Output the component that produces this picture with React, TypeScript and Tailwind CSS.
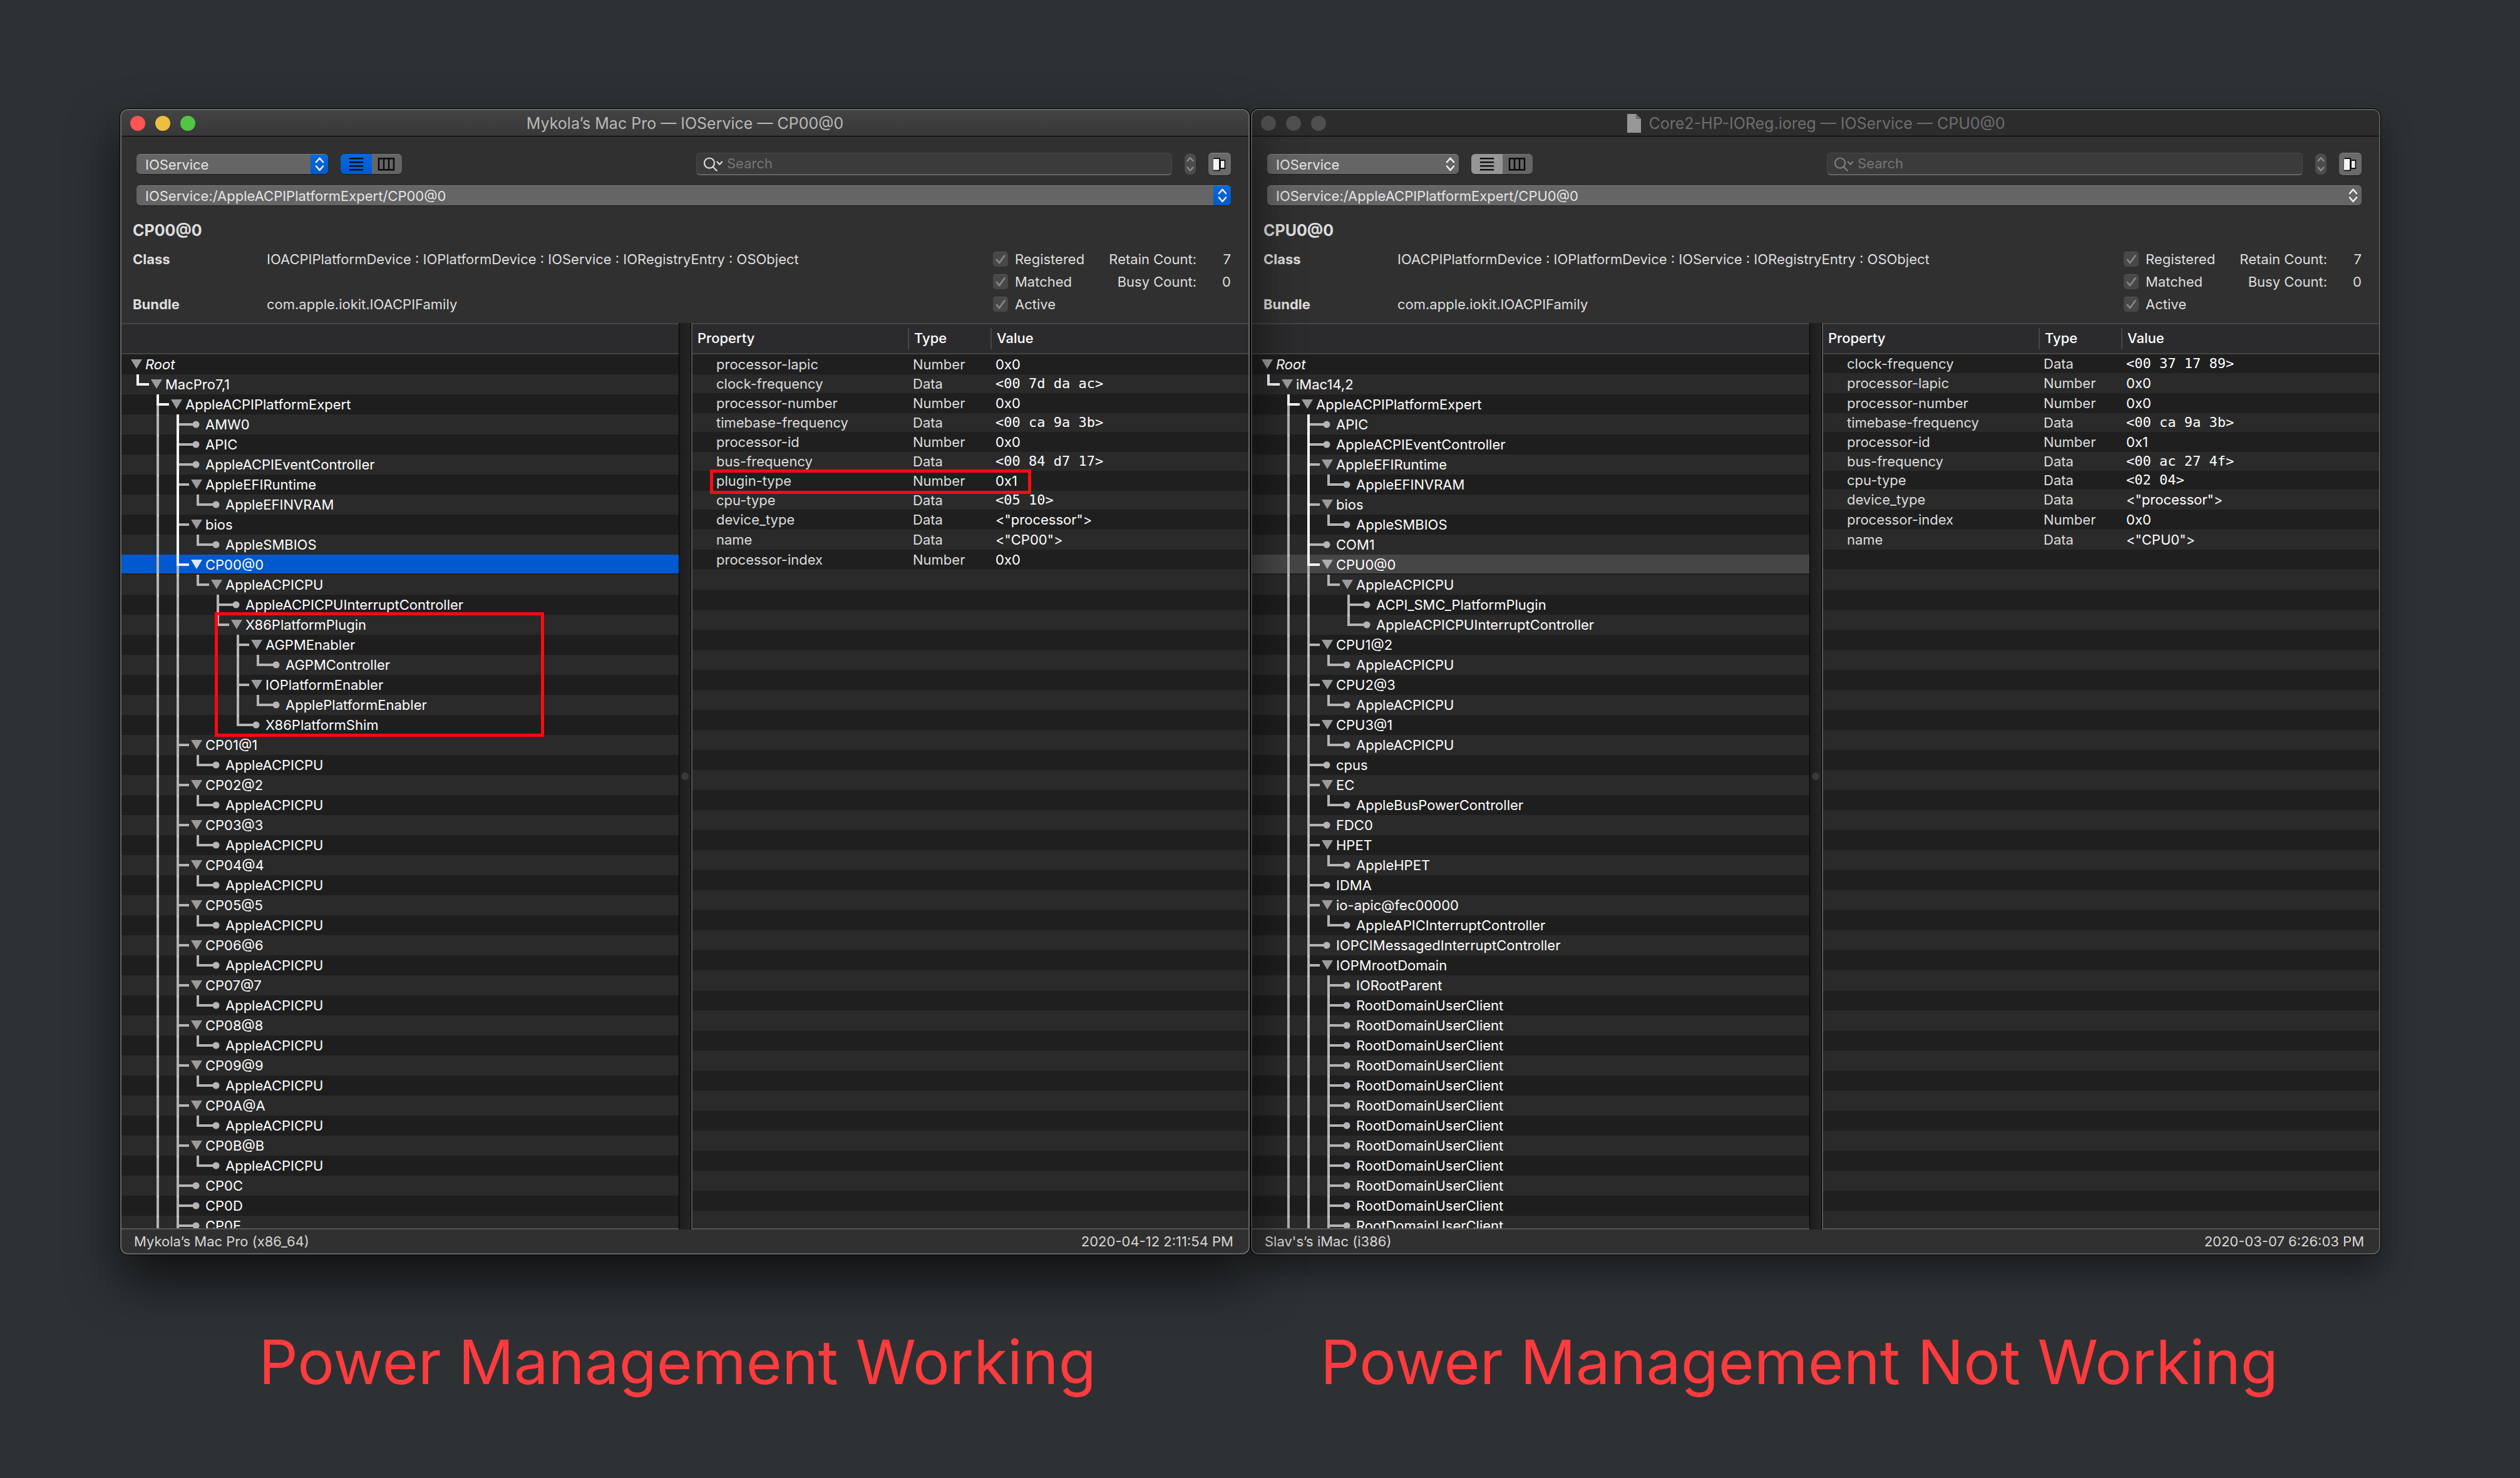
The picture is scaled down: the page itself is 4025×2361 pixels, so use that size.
import { useId } from "react";
import clsx from "clsx";

type Node = [depth: number, label: string, kind?: "leaf"];
type Property = [name: string, type: "Number" | "Data", value: string];

interface Registry {
  active: boolean;
  title: string;
  plane: string;
  path: string;
  name: string;
  tree: Node[];
  selected: number;
  framedNode?: number;
  properties: Property[];
  framedProperty?: number;
  machine: string;
  date: string;
}

const cores = ["1@1", "2@2", "3@3", "4@4", "5@5", "6@6", "7@7", "8@8", "9@9", "A@A", "B@B"];

const working: Registry = {
  active: true,
  title: "Mykola’s Mac Pro — IOService — CP00@0",
  plane: "IOService",
  path: "IOService:/AppleACPIPlatformExpert/CP00@0",
  name: "CP00@0",
  tree: [
    [0, "Root"],
    [1, "MacPro7,1"],
    [2, "AppleACPIPlatformExpert"],
    [3, "AMW0", "leaf"],
    [3, "APIC", "leaf"],
    [3, "AppleACPIEventController", "leaf"],
    [3, "AppleEFIRuntime"],
    [4, "AppleEFINVRAM", "leaf"],
    [3, "bios"],
    [4, "AppleSMBIOS", "leaf"],
    [3, "CP00@0"],
    [4, "AppleACPICPU"],
    [5, "AppleACPICPUInterruptController", "leaf"],
    [5, "X86PlatformPlugin"],
    [6, "AGPMEnabler"],
    [7, "AGPMController", "leaf"],
    [6, "IOPlatformEnabler"],
    [7, "ApplePlatformEnabler", "leaf"],
    [6, "X86PlatformShim", "leaf"],
    ...cores.flatMap((core): Node[] => [
      [3, `CP0${core}`],
      [4, "AppleACPICPU", "leaf"],
    ]),
    [3, "CP0C", "leaf"],
    [3, "CP0D", "leaf"],
    [3, "CP0E", "leaf"],
  ],
  selected: 10,
  framedNode: 13,
  properties: [
    ["processor-lapic", "Number", "0x0"],
    ["clock-frequency", "Data", "<00 7d da ac>"],
    ["processor-number", "Number", "0x0"],
    ["timebase-frequency", "Data", "<00 ca 9a 3b>"],
    ["processor-id", "Number", "0x0"],
    ["bus-frequency", "Data", "<00 84 d7 17>"],
    ["plugin-type", "Number", "0x1"],
    ["cpu-type", "Data", "<05 10>"],
    ["device_type", "Data", '<"processor">'],
    ["name", "Data", '<"CP00">'],
    ["processor-index", "Number", "0x0"],
  ],
  framedProperty: 6,
  machine: "Mykola’s Mac Pro (x86_64)",
  date: "2020-04-12 2:11:54 PM",
};

const notWorking: Registry = {
  active: false,
  title: "Core2-HP-IOReg.ioreg — IOService — CPU0@0",
  plane: "IOService",
  path: "IOService:/AppleACPIPlatformExpert/CPU0@0",
  name: "CPU0@0",
  tree: [
    [0, "Root"],
    [1, "iMac14,2"],
    [2, "AppleACPIPlatformExpert"],
    [3, "APIC", "leaf"],
    [3, "AppleACPIEventController", "leaf"],
    [3, "AppleEFIRuntime"],
    [4, "AppleEFINVRAM", "leaf"],
    [3, "bios"],
    [4, "AppleSMBIOS", "leaf"],
    [3, "COM1", "leaf"],
    [3, "CPU0@0"],
    [4, "AppleACPICPU"],
    [5, "ACPI_SMC_PlatformPlugin", "leaf"],
    [5, "AppleACPICPUInterruptController", "leaf"],
    [3, "CPU1@2"],
    [4, "AppleACPICPU", "leaf"],
    [3, "CPU2@3"],
    [4, "AppleACPICPU", "leaf"],
    [3, "CPU3@1"],
    [4, "AppleACPICPU", "leaf"],
    [3, "cpus", "leaf"],
    [3, "EC"],
    [4, "AppleBusPowerController", "leaf"],
    [3, "FDC0", "leaf"],
    [3, "HPET"],
    [4, "AppleHPET", "leaf"],
    [3, "IDMA", "leaf"],
    [3, "io-apic@fec00000"],
    [4, "AppleAPICInterruptController", "leaf"],
    [3, "IOPCIMessagedInterruptController", "leaf"],
    [3, "IOPMrootDomain"],
    [4, "IORootParent", "leaf"],
    ...Array.from({ length: 12 }, (): Node => [4, "RootDomainUserClient", "leaf"]),
  ],
  selected: 10,
  properties: [
    ["clock-frequency", "Data", "<00 37 17 89>"],
    ["processor-lapic", "Number", "0x0"],
    ["processor-number", "Number", "0x0"],
    ["timebase-frequency", "Data", "<00 ca 9a 3b>"],
    ["processor-id", "Number", "0x1"],
    ["bus-frequency", "Data", "<00 ac 27 4f>"],
    ["cpu-type", "Data", "<02 04>"],
    ["device_type", "Data", '<"processor">'],
    ["processor-index", "Number", "0x0"],
    ["name", "Data", '<"CPU0">'],
  ],
  machine: "Slav's’s iMac (i386)",
  date: "2020-03-07 6:26:03 PM",
};

const GRAY = "#b4b4b4";
const JOINT = "#c6c6c6";
const WHITE = "#f8f8ff";

/** Whether the level's line goes on below this row; the list itself runs past the last row. */
function continues(tree: Node[], row: number, level: number) {
  for (let i = row + 1; i < tree.length; i++) {
    if (tree[i][0] < level) return false;
    if (tree[i][0] === level) return true;
  }
  return level > 1;
}

function ancestorAt(tree: Node[], row: number, level: number) {
  if (level > tree[row][0]) return -1;
  let i = row;
  while (i >= 0 && tree[i][0] !== level) i--;
  return i;
}

function Connectors({ tree, row, selected, active }: { tree: Node[]; row: number; selected: number; active: boolean }) {
  const [depth, , kind] = tree[row];
  const width = 38 + 32 * depth;
  const levels = Array.from({ length: depth }, (_, i) => i + 1);
  const onPath = depth > 0 && ancestorAt(tree, selected, depth) === row;
  const x0 = 32 * depth;
  const arrow = row === selected ? (active ? "#dbe7fa" : "#acacac") : "#9b9b9b";
  return (
    <svg width={width} height={32} viewBox={`0 0 ${width} 32`} className="shrink-0" aria-hidden="true">
      {levels.map((level) => {
        const x = 32 * level - 8;
        const target = ancestorAt(tree, selected, level);
        const parent = ancestorAt(tree, selected, level - 1);
        const bright = target >= 0 && row > parent && row <= target;
        const more = continues(tree, row, level);
        if (!more && level !== depth) return null;
        const first = tree[row - 1][0] < level;
        return (
          <g key={level}>
            <rect x={x} width={4} height={more ? 32 : 18} fill={bright && row < target ? WHITE : GRAY} />
            {!bright && !first && <rect x={x} width={4} height={3} fill={JOINT} />}
            {bright && <rect x={x} width={4} height={row < target ? 32 : 18} fill={WHITE} />}
          </g>
        );
      })}
      {depth > 0 && (
        <rect x={x0 - 4} y={14} width={kind ? 24 : 16} height={4} fill={onPath ? WHITE : GRAY} />
      )}
      {kind ? (
        <circle cx={x0 + 23} cy={16} r={5.5} fill={GRAY} />
      ) : (
        <path d={`M${x0 + 15} 8h18l-9 15z`} fill={arrow} />
      )}
    </svg>
  );
}

function Tree({ data }: { data: Registry }) {
  const { tree, selected, active } = data;
  return (
    <section aria-label="Registry tree" className="flex min-w-0 flex-col">
      <div className="h-[50px] border-y-2 border-[#454545] bg-[#2b2b2d]" />
      <ul role="tree" className="h-[1396px] overflow-hidden">
        {tree.map(([depth, label], row) => (
          <li
            key={row}
            role="treeitem"
            aria-level={depth + 1}
            aria-selected={row === selected}
            className={clsx(
              "flex h-8 items-center whitespace-nowrap text-white",
              row === data.framedNode && "relative",
              row === selected
                ? active
                  ? "border-b-2 border-[#1e1e1e] bg-[#0059cf]"
                  : "border-b-2 border-[#1e1e1e] bg-[#464646]"
                : row % 2
                  ? "bg-[#2a2a2a]"
                  : "bg-[#1e1e1e]",
            )}
          >
            <span className="flex h-8 shrink-0 items-center self-start">
              <Connectors tree={tree} row={row} selected={selected} active={active} />
              <span className={clsx(depth === 0 && "italic")}>{label}</span>
            </span>
            {row === data.framedNode && (
              <span className="absolute -top-1 left-[149px] h-[199px] w-[526px] border-5 border-[#ff0a10]" />
            )}
          </li>
        ))}
      </ul>
      <div className="h-0.5 bg-[#565656]" />
    </section>
  );
}

function Properties({ data }: { data: Registry }) {
  const fill = 44 - data.properties.length;
  return (
    <section aria-label="Properties" className="flex min-w-0 flex-col border-l-2 border-[#565656]">
      <div className="h-[1446px] overflow-hidden">
        <table className="w-full table-fixed border-separate border-spacing-0 text-left">
          <colgroup>
            <col className="w-[344px]" />
            <col className="w-[132px]" />
            <col />
          </colgroup>
          <thead>
            <tr className="h-[50px] bg-[#2b2b2d] text-white">
              {["Property", "Type", "Value"].map((heading, i) => (
                <th key={heading} scope="col" className="border-y-2 border-[#454545] p-0 font-medium">
                  <div className={clsx("h-[34px] pl-2 leading-8", i > 0 && "border-l-2 border-[#464646]")}>
                    {heading}
                  </div>
                </th>
              ))}
            </tr>
          </thead>
          <tbody>
            {data.properties.map(([name, type, value], row) => {
              const mono = /^<\d/.test(value);
              return (
                <tr
                  key={name}
                  className={clsx(
                    mono ? "h-[30px] leading-[30px]" : "h-8 leading-8",
                    row % 2 ? "bg-[#2a2a2a]" : "bg-[#1f1f1f]",
                  )}
                >
                  <td className={clsx("p-0 pl-[38px] text-[#dcdcdc]", row === data.framedProperty && "relative")}>
                    {name}
                    {row === data.framedProperty && (
                      <span className="absolute -top-0.5 left-7 h-[39px] w-[513px] border-5 border-[#ff0a10]" />
                    )}
                  </td>
                  <td className="p-0 pl-2 text-[#dcdcdc]">{type}</td>
                  <td
                    className={clsx(
                      "p-0 pl-2 text-white",
                      mono && "font-['DejaVu_Sans_Mono',monospace]",
                    )}
                  >
                    {value}
                  </td>
                </tr>
              );
            })}
            {Array.from({ length: fill }, (_, i) => (
              <tr key={i} className={clsx("h-8", (i + data.properties.length) % 2 ? "bg-[#2a2a2a]" : "bg-[#1f1f1f]")}>
                <td colSpan={3} className="p-0" />
              </tr>
            ))}
          </tbody>
        </table>
      </div>
      <div className="h-0.5 bg-[#565656]" />
    </section>
  );
}

function PopUp({ label, value, active, wide }: { label: string; value: string; active: boolean; wide?: boolean }) {
  return (
    <div
      className={clsx(
        "relative h-8 overflow-hidden rounded-md border-t border-[#808080] bg-[#656565] shadow-[0_1px_1px_#1c1c1c]",
        wide ? "w-full" : "w-[306px]",
      )}
    >
      <select
        aria-label={label}
        defaultValue={value}
        className="h-full w-full appearance-none bg-transparent pr-8 pl-3.5 leading-[30px] text-[#e4e4e4]"
      >
        <option>{value}</option>
      </select>
      <span
        className={clsx(
          "pointer-events-none absolute -top-px right-0 h-8 w-7",
          active && "bg-linear-to-b from-[#006ae3] to-[#005acb]",
        )}
      >
        <svg width={28} height={32} viewBox="0 0 28 32" fill="none" stroke="#eeeeee" strokeWidth={2.6} strokeLinecap="round" strokeLinejoin="round">
          <path d="M9 13l5.500-6.300L20 13M9 19.500l5.500 6.300L20 19.500" />
        </svg>
      </span>
    </div>
  );
}

function ViewSwitch({ active }: { active: boolean }) {
  return (
    <div className="flex h-8 overflow-hidden rounded-md shadow-[0_1px_1px_#1c1c1c]">
      <button
        type="button"
        aria-label="List view"
        aria-pressed="true"
        className={clsx("w-[50px]", active ? "bg-linear-to-b from-[#006ae3] to-[#005acb]" : "bg-[#969696]")}
      >
        <svg width={50} height={32} viewBox="0 0 50 32" fill="#0a0a0a">
          <path d="M14 6h22v2H14zM14 12h22v2H14zM14 18h22v2H14zM14 24h22v2H14z" />
          <path d="M13 8h24v1H13zM13 14h24v1H13zM13 20h24v1H13zM13 26h24v1H13z" opacity={0.35} />
        </svg>
      </button>
      <button type="button" aria-label="Column view" aria-pressed="false" className="w-12 border-t border-[#7a7a7a] bg-[#656565]">
        <svg width={48} height={32} viewBox="0 1 48 32" fill="none" stroke="#0a0a0a" strokeWidth={2.5}>
          <path d="M11 7.200h24v18H11zM19 7v18M27 7v18" />
        </svg>
      </button>
    </div>
  );
}

function Search({ active }: { active: boolean }) {
  return (
    <label className="flex h-9 w-[760px] items-center rounded-md border border-b-2 border-[#484848] border-b-[#666666] bg-[#3b3b3b] pl-2.5">
      <svg
        width={36}
        height={32}
        viewBox="0 0 36 32"
        fill="none"
        stroke={active ? "#dedede" : "#808080"}
        strokeWidth={2.2}
        strokeLinecap="round"
        strokeLinejoin="round"
        className="shrink-0"
        aria-hidden="true"
      >
        <circle cx={10} cy={14.500} r={8} />
        <path d="M15.800 20.500l6 6.200M22.500 12.500l3.800 4.200 3.800-4.200" />
      </svg>
      <input
        type="search"
        aria-label="Search"
        placeholder="Search"
        className="min-w-0 flex-1 bg-transparent pl-0.5 text-white outline-none placeholder:text-[#757575]"
      />
    </label>
  );
}

function Toolbar({ data }: { data: Registry }) {
  return (
    <div className="flex flex-col gap-4 pt-[26px] pr-7 pl-6">
      <div className="flex h-9 items-center gap-5">
        <PopUp label="Plane" value={data.plane} active={data.active} />
        <ViewSwitch active={data.active} />
        <div className="flex-1" />
        <Search active={data.active} />
        <button type="button" aria-label="Previous or next match" className="h-[34px] w-[18px] rounded-lg bg-[#4c4c4c]">
          <svg width={18} height={34} viewBox="0 0 18 34" fill="none" stroke="#909090" strokeWidth={2.2} strokeLinecap="round" strokeLinejoin="round">
            <path d="M4.500 12L9 7l4.500 5M4.500 22.500l4.500 5 4.500-5" />
          </svg>
        </button>
        <button
          type="button"
          aria-label="Toggle drawer"
          className="h-9 w-9 rounded-md border-t border-[#858585] bg-[#6a6a6a] shadow-[0_1px_1px_#1c1c1c]"
        >
          <svg width={36} height={36} viewBox="0 1 36 36">
            <path d="M7.500 8.500H18v2.500h9.500V26H18v3.500H7.500z" fill="#3a3a3a" />
            <path d="M9 8h10v21H9zM19 11h8v15h-8z" fill="#151515" />
            <path d="M8 10h9v17.500H8zM20 13h5.500v11H20z" fill="#f4f4f4" />
          </svg>
        </button>
      </div>
      <PopUp label="Path" value={data.path} active={data.active} wide />
    </div>
  );
}

function CheckBox({ label }: { label: string }) {
  const id = useId();
  return (
    <div className="flex items-center gap-[11px]">
      <span className="relative flex">
        <input
          id={id}
          type="checkbox"
          defaultChecked
          disabled
          className="h-6 w-6 appearance-none rounded-[5px] border-t border-[#5a5a5a] bg-[#484848]"
        />
        <svg width={24} height={24} viewBox="0 0 24 24" fill="none" stroke="#878787" strokeWidth={2.8} strokeLinecap="round" strokeLinejoin="round" className="pointer-events-none absolute inset-0">
          <path d="M6 13l4 5L18.500 6.500" />
        </svg>
      </span>
      <label htmlFor={id}>{label}</label>
    </div>
  );
}

function Summary({ data }: { data: Registry }) {
  return (
    <div className="pt-6 pr-7 pb-3 pl-[18px] text-[#dedede]">
      <h2 className="text-[25px] leading-8 font-bold">{data.name}</h2>
      <div className="flex justify-between pt-3 leading-9">
        <dl className="grid grid-cols-[214px_auto] content-start gap-y-9 whitespace-nowrap">
          <dt className="font-bold">Class</dt>
          <dd>IOACPIPlatformDevice : IOPlatformDevice : IOService : IORegistryEntry : OSObject</dd>
          <dt className="font-bold">Bundle</dt>
          <dd>com.apple.iokit.IOACPIFamily</dd>
        </dl>
        <div className="grid w-[380px] grid-cols-[1fr_auto_55px] content-start text-right">
          <CheckBox label="Registered" />
          <span>Retain Count:</span>
          <span>7</span>
          <CheckBox label="Matched" />
          <span>Busy Count:</span>
          <span>0</span>
          <CheckBox label="Active" />
        </div>
      </div>
    </div>
  );
}

function TitleBar({ data }: { data: Registry }) {
  const { active } = data;
  const light = "h-6 w-6 rounded-full";
  return (
    <header
      className={clsx(
        "grid h-[42px] grid-cols-[1fr_auto_1fr] items-center border-b border-black px-3.5",
        active ? "bg-linear-to-b from-[#434343] to-[#383838]" : "bg-[#2c2c2c]",
      )}
    >
      <div className="flex gap-4">
        <button type="button" aria-label="Close" className={clsx(light, active ? "bg-[#ff5552]" : "bg-[#4f4f4f]")} />
        <button type="button" aria-label="Minimize" className={clsx(light, active ? "bg-[#ebbf40]" : "bg-[#4f4f4f]")} />
        <button type="button" aria-label="Zoom" className={clsx(light, active ? "bg-[#53c443]" : "bg-[#4f4f4f]")} />
      </div>
      <div className="flex items-center gap-3">
        {!active && (
          <svg width={24} height={30} viewBox="0 0 24 30" aria-hidden="true">
            <path d="M1 0h14l8 8v22H1z" fill="#979797" />
            <path d="M15 0l8 8h-8z" fill="#6e6e6e" />
          </svg>
        )}
        <h1 className={clsx("text-[25px] leading-8", active ? "text-[#b8b8b8]" : "text-[#6e6e6e]")}>{data.title}</h1>
      </div>
    </header>
  );
}

function Window({ data }: { data: Registry }) {
  return (
    <article
      className={clsx(
        "relative overflow-hidden rounded-xl border-2 bg-[#303030] text-[22px]",
        data.active
          ? "z-10 border-[#686868] shadow-[0_0_0_1px_#000,0_40px_80px_rgba(0,0,0,0.65)]"
          : "border-[#5c5c5c] shadow-[0_0_0_1px_#000,0_24px_50px_rgba(0,0,0,0.45)]",
      )}
    >
      <TitleBar data={data} />
      <Toolbar data={data} />
      <Summary data={data} />
      <div className="grid grid-cols-[1fr_20px_1fr]">
        <Tree data={data} />
        <div className="flex items-center justify-center border-x border-black bg-linear-to-r from-[#1c1c1c] to-[#252525]">
          <span className="h-3 w-3 rounded-full bg-[#3a3a3a]" />
        </div>
        <Properties data={data} />
      </div>
      <footer className="flex h-[38px] items-center justify-between pr-6 pl-5 text-[#d6d6d6]">
        <span>{data.machine}</span>
        <time>{data.date}</time>
      </footer>
    </article>
  );
}

export default function App() {
  return (
    <main className="min-h-screen bg-[#2d3134] pt-[174px] pr-[223px] pl-48 font-[Inter,sans-serif]">
      <div className="grid grid-cols-2 gap-x-0.5">
        <Window data={working} />
        <Window data={notWorking} />
        <p className="pt-28 pr-6 text-center text-[98px] leading-[120px] whitespace-nowrap text-[#ff3b3d]">
          Power Management Working
        </p>
        <p className="pt-28 pr-[52px] text-center text-[98px] leading-[120px] whitespace-nowrap text-[#ff3b3d]">
          Power Management Not Working
        </p>
      </div>
    </main>
  );
}
